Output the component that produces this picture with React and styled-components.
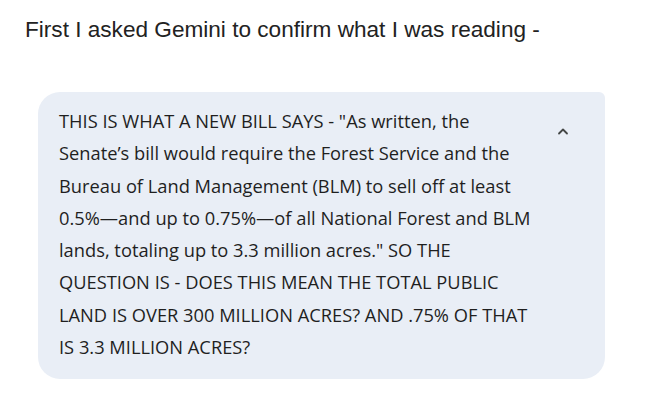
import React from "react";
import styled, { createGlobalStyle } from "styled-components";

const Global = createGlobalStyle`
  html, body { margin: 0; padding: 0; background: #ffffff; }
`;

const Page = styled.div`
  width: 668px;
  height: 403px;
  box-sizing: border-box;
  padding: 17px 0 0 25px;
  background: #ffffff;
`;

const Heading = styled.p`
  margin: 0;
  font-family: "Liberation Sans", Arial, sans-serif;
  font-size: 22.6px;
  line-height: 26px;
  color: #222222;
`;

const Bubble = styled.div`
  margin: 49px 0 0 13px;
  width: 567px;
  box-sizing: border-box;
  padding: 13px 20px 16px 21px;
  background: #e9eef6;
  border-radius: 22px 6px 22px 22px;
  display: flex;
  align-items: flex-start;
  justify-content: space-between;
`;

const Message = styled.p`
  margin: 0;
  width: 492px;
  font-family: "Open Sans", Roboto, sans-serif;
  font-size: 18.3px;
  line-height: 32.3px;
  color: #1f1f1f;
  white-space: nowrap;
`;

const Toggle = styled.button`
  margin: 20px 16px 0 0;
  padding: 0;
  border: none;
  background: transparent;
  width: 12px;
  height: 12px;
  display: flex;
  align-items: center;
  justify-content: center;
  color: #444746;
`;

export default function App() {
  return (
    <>
      <Global />
      <Page>
        <Heading>First I asked Gemini to confirm what I was reading -</Heading>
        <Bubble>
          <Message>
            THIS IS WHAT A NEW BILL SAYS - "As written, the<br />
            Senate’s bill would require the Forest Service and the<br />
            Bureau of Land Management (BLM) to sell off at least<br />
            0.5%—and up to 0.75%—of all National Forest and BLM<br />
            lands, totaling up to 3.3 million acres." SO THE<br />
            QUESTION IS - DOES THIS MEAN THE TOTAL PUBLIC<br />
            LAND IS OVER 300 MILLION ACRES? AND .75% OF THAT<br />
            IS 3.3 MILLION ACRES?
          </Message>
          <Toggle aria-label="Collapse">
            <svg width="12" height="8" viewBox="0 0 12 8" fill="none">
              <path d="M2 6.5 L6 2.5 L10 6.5" stroke="currentColor" strokeWidth="1.8" strokeLinecap="round" strokeLinejoin="round" />
            </svg>
          </Toggle>
        </Bubble>
      </Page>
    </>
  );
}
